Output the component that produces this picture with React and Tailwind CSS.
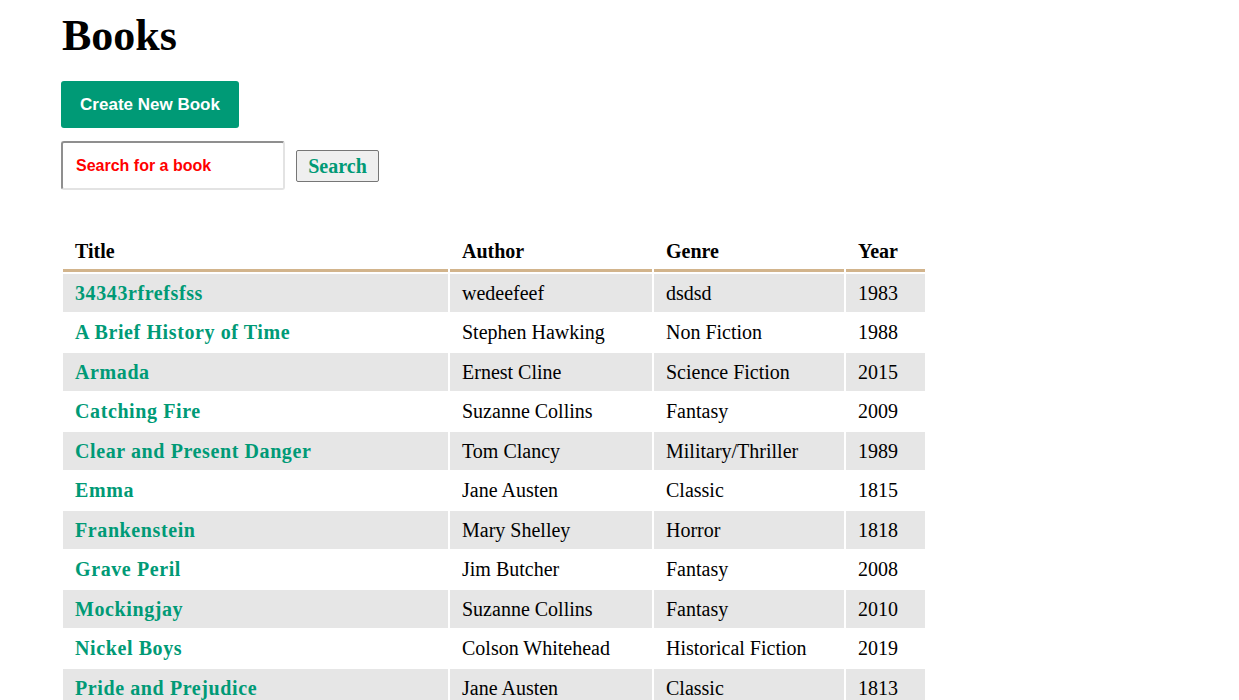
const books = [
  ["34343rfrefsfss", "wedeefeef", "dsdsd", "1983"],
  ["A Brief History of Time", "Stephen Hawking", "Non Fiction", "1988"],
  ["Armada", "Ernest Cline", "Science Fiction", "2015"],
  ["Catching Fire", "Suzanne Collins", "Fantasy", "2009"],
  ["Clear and Present Danger", "Tom Clancy", "Military/Thriller", "1989"],
  ["Emma", "Jane Austen", "Classic", "1815"],
  ["Frankenstein", "Mary Shelley", "Horror", "1818"],
  ["Grave Peril", "Jim Butcher", "Fantasy", "2008"],
  ["Mockingjay", "Suzanne Collins", "Fantasy", "2010"],
  ["Nickel Boys", "Colson Whitehead", "Historical Fiction", "2019"],
  ["Pride and Prejudice", "Jane Austen", "Classic", "1813"],
  ["The Hobbit", "J.R.R. Tolkien", "Fantasy", "1937"],
];

const serif = "font-['Liberation_Serif',serif]";
const sans = "font-['Liberation_Sans',Arial,sans-serif]";

const App = () => {
  return (
    <div className={`min-h-screen bg-white pl-[61px] text-black ${serif}`}>
      <h1 className="pt-[14px] text-[44px] leading-[44px] font-bold pl-px">Books</h1>
      <button className={`mt-[23px] h-[47px] w-[178px] rounded-[3px] bg-[#009a76] text-[17px] font-bold text-white ${sans}`}>
        Create New Book
      </button>
      <div className="mt-[13px] flex items-center gap-[11px]">
        <input
          type="text"
          placeholder="Search for a book"
          className={`h-[49px] w-[224px] rounded-[3px] border-2 border-t-[#8f8f8f] border-l-[#8f8f8f] border-r-[#e3e3e3] border-b-[#e3e3e3] px-[13px] text-[16px] font-bold placeholder:text-[#ff0000] ${sans}`}
        />
        <button className="h-[32px] w-[83px] rounded-[2px] border border-[#767676] bg-[#efefef] text-[20px] font-bold text-[#009a76]">
          Search
        </button>
      </div>
      <table className="mt-[42px] border-separate border-spacing-0.5 text-[20px]">
        <thead>
          <tr>
            <th className="w-[385px] h-[38px] border-b-[3px] border-[#d2b48c] px-3 pb-[2px] text-left font-bold">Title</th>
            <th className="w-[202px] border-b-[3px] border-[#d2b48c] px-3 pb-[2px] text-left font-bold">Author</th>
            <th className="w-[190px] border-b-[3px] border-[#d2b48c] px-3 pb-[2px] text-left font-bold">Genre</th>
            <th className="w-[79px] border-b-[3px] border-[#d2b48c] px-3 pb-[2px] text-left font-bold">Year</th>
          </tr>
        </thead>
        <tbody>
          {books.map((b, i) => (
            <tr key={b[0]} className={i % 2 === 0 ? "bg-[#e6e6e6]" : "bg-white"}>
              <td className="h-[37.5px] px-3">
                <a href="#" className="font-bold tracking-[0.6px] text-[#009a76]">{b[0]}</a>
              </td>
              <td className="px-3">{b[1]}</td>
              <td className="px-3">{b[2]}</td>
              <td className="px-3">{b[3]}</td>
            </tr>
          ))}
        </tbody>
      </table>
    </div>
  );
};

export default App;
